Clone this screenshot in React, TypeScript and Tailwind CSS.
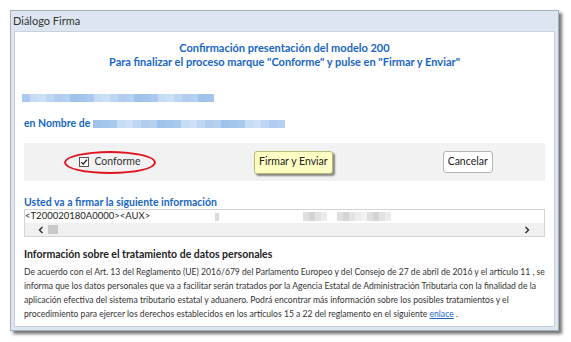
// "Diálogo Firma" confirmation dialog (AEAT modelo 200 signing step).

const FONT = "font-['Lato','Open_Sans',sans-serif]";

// pixelated "redacted" strip: a few shades of blue side by side
const blueShades = ["#a9c9ee", "#bcd6f3", "#9ec2ea", "#c6dcf5", "#b0cdef", "#a3c5ec", "#cde0f6", "#b5d1f1"];

function Redacted({ width, seed = 0 }: { width: number; seed?: number }) {
  const cells = Math.round(width / 8);
  return (
    <div className="flex h-[8px] overflow-hidden" style={{ width }}>
      {Array.from({ length: cells }, (_, i) => (
        <div
          key={i}
          className="h-full w-[8px] shrink-0"
          style={{ background: blueShades[(i * 3 + seed) % blueShades.length] }}
        />
      ))}
    </div>
  );
}

function GrayNoise({ width }: { width: number }) {
  const shades = ["#d6d6d6", "#e8e8e8", "#c9c9c9", "#efefef", "#dcdcdc"];
  return (
    <div className="flex h-[9px] opacity-80" style={{ width }}>
      {Array.from({ length: Math.round(width / 6) }, (_, i) => (
        <div key={i} className="h-full w-[6px] shrink-0" style={{ background: shades[(i * 2) % shades.length] }} />
      ))}
    </div>
  );
}

export default function App() {
  return (
    <div className={`${FONT} h-[342px] w-[571px] overflow-hidden bg-white pl-[10px] pt-[10px]`}>
      <div className="flex h-[321px] w-[549px] flex-col border border-[#a5b0ba] bg-[#dce6f0] shadow-[3px_3px_3px_rgba(0,0,0,0.55)]">
        {/* title bar */}
        <div className="flex h-[20px] items-center px-[2px] text-[11px] text-[#333]">Diálogo Firma</div>

        {/* body */}
        <div className="mx-[3px] mb-[3px] flex-1 border border-[#c8d2dc] bg-white px-[9px] pt-[9px]">
          <div className="text-center text-[11px] font-bold leading-[14px] text-[#1766c4]">
            <p>Confirmación presentación del modelo 200</p>
            <p>Para finalizar el proceso marque "Conforme" y pulse en "Firmar y Enviar"</p>
          </div>

          <div className="mt-[25px] -ml-[2px]">
            <Redacted width={192} />
          </div>

          <div className="mt-[15px] flex h-[14px] items-center gap-[3px] text-[10.5px] font-bold text-[#1766c4]">
            <span>en Nombre de</span>
            <Redacted width={192} seed={2} />
          </div>

          {/* action strip */}
          <div className="mt-[12px] flex h-[38px] items-center bg-[#f2f2f2] text-[10.5px] text-[#333]">
            <div className="relative ml-[40px] flex h-[23px] w-[92px] items-center justify-center gap-[5px] rounded-[50%] border-2 border-[#e0141e]">
              <span className="flex h-[10px] w-[10px] items-center justify-center border border-[#555] bg-white">
                <svg viewBox="0 0 10 10" className="h-[8px] w-[8px]">
                  <path d="M1.5 5.2 L4 7.6 L8.6 2.2" fill="none" stroke="#222" strokeWidth="1.6" />
                </svg>
              </span>
              <span>Conforme</span>
            </div>

            <div className="ml-[98px] flex h-[23px] items-center rounded-[3px] border border-[#b9b97a] bg-[#ffffc4] px-[4px] text-[#222] shadow-[2px_2px_2px_rgba(0,0,0,0.45)]">
              Firmar y Enviar
            </div>

            <div className="ml-[110px] flex h-[22px] items-center rounded-[3px] border border-[#b5b5b5] bg-white px-[4px] text-[#222]">
              Cancelar
            </div>
          </div>

          <p className="mt-[14px] h-[14px] text-[10.5px] font-bold leading-[14px] text-[#1766c4]">
            Usted va a firmar la siguiente información
          </p>

          {/* signed content box with horizontal scrollbar */}
          <div className="flex h-[28px] flex-col border border-[#d4d4d4] bg-white">
            <div className="flex h-[13px] items-center text-[9.5px] text-[#222]">
              <span>&lt;T200020180A0000&gt;&lt;AUX&gt;</span>
              <div className="ml-[65px] h-[8px] w-[4px] bg-[#dadada]" />
              <div className="ml-[84px]">
                <GrayNoise width={24} />
              </div>
              <div className="ml-[10px]">
                <GrayNoise width={54} />
              </div>
            </div>
            <div className="flex flex-1 items-center bg-[#f0f0f0] px-[12px] text-[#444]">
              <svg viewBox="0 0 8 8" className="h-[8px] w-[8px]">
                <path d="M5.5 1 L2.5 4 L5.5 7" fill="none" stroke="#333" strokeWidth="1.5" />
              </svg>
              <div className="ml-[3px] h-[9px] w-[10px] bg-[#c8c8c8]" />
              <div className="flex-1" />
              <svg viewBox="0 0 8 8" className="mr-[1px] h-[8px] w-[8px]">
                <path d="M2.5 1 L5.5 4 L2.5 7" fill="none" stroke="#333" strokeWidth="1.5" />
              </svg>
            </div>
          </div>

          <p className="mt-[10px] h-[14px] text-[10.5px] font-bold leading-[14px] text-[#222]">
            Información sobre el tratamiento de datos personales
          </p>

          <p className="mt-[4px] text-[8.6px] leading-[14px] text-[#333]">
            De acuerdo con el Art. 13 del Reglamento (UE) 2016/679 del Parlamento Europeo y del Consejo de 27 de abril
            de 2016 y el artículo 11 , se informa que los datos personales que va a facilitar serán tratados por la
            Agencia Estatal de Administración Tributaria con la finalidad de la aplicación efectiva del sistema
            tributario estatal y aduanero. Podrá encontrar más información sobre los posibles tratamientos y el
            procedimiento para ejercer los derechos establecidos en los artículos 15 a 22 del reglamento en el
            siguiente <span className="text-[#1a66c8] underline">enlace</span> .
          </p>
        </div>
      </div>
    </div>
  );
}
